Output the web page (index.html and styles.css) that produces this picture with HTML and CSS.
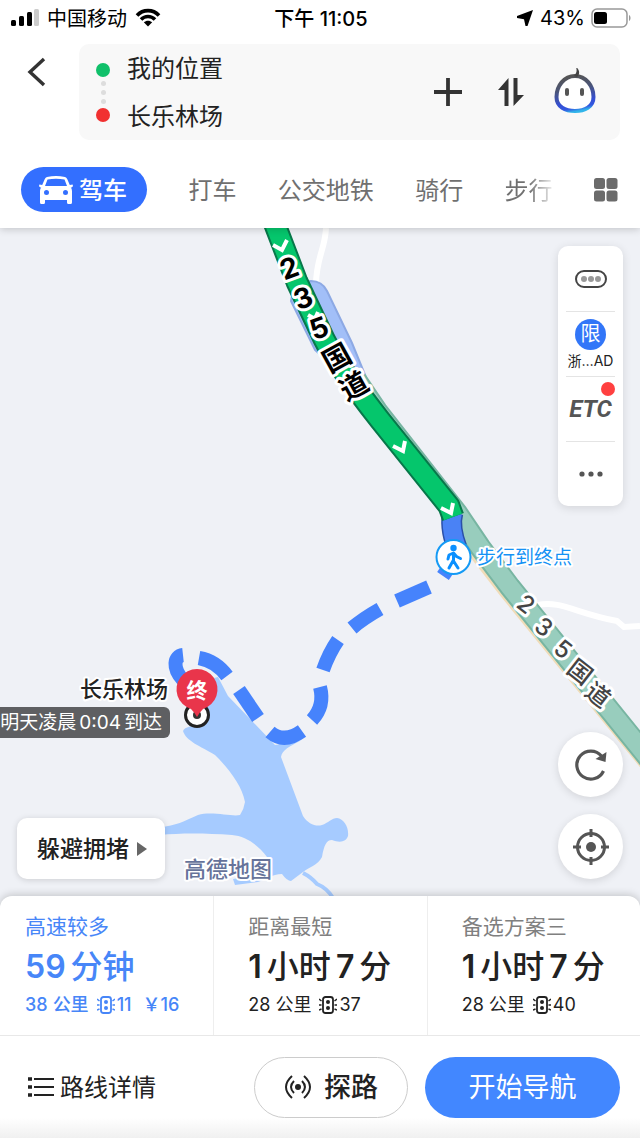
FILE: index.html
```html
<!DOCTYPE html>
<html lang="zh-CN">
<head>
    <meta charset="utf-8">
    <meta name="viewport" content="width=device-width, initial-scale=1">
    <title>路线规划</title>
    <link rel="stylesheet" href="styles.css">
</head>
<body>
    <header class="header">
        <div class="status">
            <div class="status-left">
                <svg width="28" height="18" viewBox="0 0 28 18">
                    <rect x="0" y="11" width="5" height="6" rx="1.5"/>
                    <rect x="8" y="7" width="5" height="10" rx="1.5"/>
                    <rect x="16" y="3" width="5" height="14" rx="1.5"/>
                    <rect x="23" y="0" width="5" height="17" rx="1.5" fill="#ccc"/>
                </svg>
                <span>中国移动</span>
                <svg width="26" height="19" viewBox="0 0 26 19">
                    <path d="M2 7.5C8 1 18 1 24 7.500M6 11.500c4-4 10-4 14 0" fill="none" stroke="#000" stroke-width="3.600"/>
                    <path d="M13 18.500l-4.200-4.200c2.400-2.200 6-2.200 8.400 0z"/>
                </svg>
            </div>
            <div class="status-time">下午 11:05</div>
            <div class="status-right">
                <svg width="18" height="18" viewBox="0 0 18 18">
                    <path d="M17 1L1 7v2l7 1.200L9.500 17h2z"/>
                </svg>
                <span>43%</span>
                <svg width="40" height="20" viewBox="0 0 40 20">
                    <rect x="1" y="1" width="35" height="18" rx="5" fill="none" stroke="#999" stroke-width="1.500"/>
                    <rect x="3" y="4" width="13" height="12" rx="2.500"/>
                    <path d="M38 7c2 1 2 5 0 6z" fill="#999"/>
                </svg>
            </div>
        </div>

        <div class="search">
            <button class="back" aria-label="返回">
                <svg width="20" height="30" viewBox="0 0 20 30">
                    <path d="M18 2L4 15l14 13" fill="none" stroke="#333" stroke-width="3.400"/>
                </svg>
            </button>
            <div class="route-box">
                <div class="route-dots">
                    <i class="dot dot-start"></i>
                    <i class="dot-small"></i>
                    <i class="dot-small"></i>
                    <i class="dot-small"></i>
                    <i class="dot dot-end"></i>
                </div>
                <div class="route-places">
                    <button class="place">我的位置</button>
                    <button class="place">长乐林场</button>
                </div>
                <div class="route-tools">
                    <button aria-label="添加途经点">
                        <svg width="28" height="28" viewBox="0 0 28 28">
                            <path d="M14 0v28M0 14h28" stroke="#333" stroke-width="3.800"/>
                        </svg>
                    </button>
                    <button aria-label="交换起终点">
                        <svg width="28" height="28" viewBox="0 0 28 28">
                            <path d="M11.500 0v28H7.500V12H1zM16.500 28V0h4v17H27z" fill="#333"/>
                        </svg>
                    </button>
                    <button aria-label="语音助手">
                        <svg width="42" height="48" viewBox="0 2 42 48">
                            <defs>
                                <linearGradient id="face" x1="0.4" y1="0" x2="0.6" y2="1">
                                    <stop offset="0" stop-color="#555"/>
                                    <stop offset="0.350" stop-color="#4b5577"/>
                                    <stop offset="0.750" stop-color="#344fd5"/>
                                    <stop offset="0.900" stop-color="#3358e0"/>
                                    <stop offset="1" stop-color="#31b5ea"/>
                                </linearGradient>
                            </defs>
                            <path d="M21 10C10 10 2.500 20 2.500 31c0 10 9 14 18.500 14s18.500-4 18.500-14C39.500 20 32 10 21 10z" fill="#fff" stroke="url(#face)" stroke-width="4"/>
                            <path d="M20 10c3-3 3-6 2-9 4 3 4 7 1 10z" fill="#444"/>
                            <rect x="11" y="22" width="4" height="8" rx="2" fill="#555"/>
                            <rect x="26" y="22" width="4" height="8" rx="2" fill="#555"/>
                        </svg>
                    </button>
                </div>
            </div>
        </div>

        <nav class="tabs">
            <button class="tab tab-active">
                <svg width="34" height="28" viewBox="0 0 34 28">
                    <path fill="#fff" fill-rule="evenodd" d="M8 1q9-2 18 0 1.500.400 2.200 2l2.600 6 2.700-.500c1 1.500 0 2.800-1.800 3 1 1 1.300 2.500 1.300 4v11q0 1.500-1.500 1.500h-2q-1.500 0-1.500-1.500V24H6v2.500Q6 28 4.500 28h-2Q1 28 1 26.500v-11c0-1.500.300-3 1.300-4C.500 11.300-.500 10 .500 8.500l2.700.500 2.600-6Q6.500 1.400 8 1zM8.500 3.500L6 10h22l-2.500-6.500Q17 2 8.500 3.500zM7.500 14a2.500 2.500 0 100 5 2.500 2.500 0 000-5zm19 0a2.500 2.500 0 100 5 2.500 2.500 0 000-5z"/>
                </svg>
                <span>驾车</span>
            </button>
            <button class="tab">打车</button>
            <button class="tab">公交地铁</button>
            <button class="tab">骑行</button>
            <button class="tab tab-fade">步行</button>
            <button class="tab-all" aria-label="全部出行方式">
                <svg width="24" height="24" viewBox="0 0 24 24" fill="#6b6b6b">
                    <rect x="0" y="0" width="11" height="11" rx="2.500"/>
                    <rect x="12.500" y="0" width="11" height="11" rx="2.500"/>
                    <rect x="0" y="12.500" width="11" height="11" rx="2.500"/>
                    <rect x="12.500" y="12.500" width="11" height="11" rx="2.500"/>
                </svg>
            </button>
        </nav>
    </header>

    <main class="map">
        <svg class="map-canvas" viewBox="0 228 640 680" preserveAspectRatio="xMidYMid slice">
            <!-- lake -->
            <path fill="#a6cbff" d="M218 677L228 696 253 722 275 745 300 741C290 746 282 750 281 757L303 816C308 824 316 827 322 825 328 823 332 818 337 818 344 819 349 827 348 836 346 842 340 843 332 840 326 840 324 846 322 857C318 865 308 868 303 872L291 881Q287 881 282 874C272 874 265 880 258 882L235 885 233 879 260 874 267 857C258 845 246 836 232 835 205 833 180 833 160 835V827C176 826 184 821 198 815 212 811 232 817 240 815Q244 809 245 802C242 785 228 768 215 755 200 746 186 741 183 731 185 726 192 728 200 720L186 702 190 684z"/>
            <path d="M303 873q8 4 14 11 10 4 16 14" fill="none" stroke="#a6cbff" stroke-width="4"/>

            <!-- minor roads -->
            <path class="minor-road" d="M326 228C325 250 316 258 316 285"/>
            <path class="minor-road" d="M538 605C560 600 578 614 617 621L624 627 640 626"/>

            <!-- national road -->
            <path d="M291 301Q293 283 311 281 322 281 327 291L352 343 372 392 352 384 315 350z" fill="#a2bff8" stroke="#8da9e4" stroke-width="2"/>
            <path d="M457 516L477 548 508 588 650 762" fill="none" stroke="#f0dcb8" stroke-width="22"/>
            <path d="M356 380L377 411 457 513 480 547 510 587 650 760" fill="none" stroke="#78b5a2" stroke-width="22"/>
            <path d="M356 380L377 411 457 513 480 547 510 587 650 760" fill="none" stroke="#98cdbd" stroke-width="18"/>

            <!-- driving route -->
            <path d="M453 512Q449 526 457 548" fill="none" stroke="#2b50a8" stroke-width="21"/>
            <path d="M453 512Q449 526 457 548" fill="none" stroke="#4a82f5" stroke-width="18"/>
            <path d="M274 222L297 282 324 339Q337 365 380 420L449 506 453 517" fill="none" stroke="#07784a" stroke-width="23" stroke-linejoin="round"/>
            <path d="M274 222L297 282 324 339Q337 365 380 420L449 506 453 517" fill="none" stroke="#05c66c" stroke-width="19" stroke-linejoin="round"/>
            <g class="arrows">
                <path d="M273 245l9 5 5-10"/>
                <path d="M308 315l7 4 3-7"/>
                <path d="M393 446l10 5 2-10"/>
                <path d="M441 508l10 5 2-10"/>
            </g>

            <!-- walking route -->
            <g class="walk-route">
                <path d="M451 564L443 576"/>
                <path d="M397 601l32-14"/>
                <path d="M352 628Q364 618 380 609"/>
                <path d="M323 670Q329 653 338 640"/>
                <path d="M320 687Q325 706 312 720"/>
                <path d="M302 731Q284 744 270 732"/>
                <path d="M258 718L239 690"/>
                <path d="M227 676Q216 661 199 658"/>
                <path d="M183 680C172 668 174 656 183 655"/>
            </g>

            <!-- road names -->
            <g class="road-name road-name-main">
                <text transform="translate(289 268) rotate(-20)">2</text>
                <text transform="translate(303 298) rotate(-20)">3</text>
                <text transform="translate(319 328) rotate(-20)">5</text>
                <text transform="translate(337 358) rotate(-29)">国</text>
                <text transform="translate(354 386) rotate(-29)">道</text>
            </g>
            <g class="road-name">
                <text transform="translate(526 604) rotate(38)">2</text>
                <text transform="translate(544 627) rotate(38)">3</text>
                <text transform="translate(563 649) rotate(38)">5</text>
                <text transform="translate(580 672) rotate(38)">国</text>
                <text transform="translate(598 695) rotate(38)">道</text>
            </g>

            <!-- walking transfer -->
            <circle cx="453.500" cy="557" r="17" fill="#fff" stroke="#149af5" stroke-width="2"/>
            <circle cx="453.500" cy="548" r="3.200" fill="#0b90ff"/>
            <path d="M453.500 554v7l4.500 7M453.500 560l-4.500 8M448 559l1-4 4.500-2 3 3.500 4 2" fill="none" stroke="#0b90ff" stroke-width="3" stroke-linecap="round" stroke-linejoin="round"/>
            <text class="walk-label" x="477" y="564">步行到终点</text>

            <!-- destination -->
            <circle cx="197" cy="715" r="11.500" fill="#fff" stroke="#222" stroke-width="3"/>
            <circle cx="197" cy="715" r="4" fill="#333"/>
            <path d="M197 717q-2-4-6-8a20.500 20.500 0 1112 0q-4 4-6 8z" fill="#e9354b"/>
            <text class="pin-text" x="197" y="698">终</text>
            <text class="dest-label" x="168" y="697">长乐林场</text>
            <rect x="-20" y="707" width="190" height="31" rx="6" fill="#5e5f62"/>
            <text class="eta" x="162" y="729">明天凌晨<tspan dx="3">0:04</tspan><tspan dx="3">到达</tspan></text>

            <text class="brand" x="184" y="877">高德地图</text>
        </svg>

        <div class="side-panel">
            <button class="side-item" aria-label="常用">
                <svg width="32" height="18" viewBox="0 0 32 18">
                    <rect x="1" y="1" width="30" height="16" rx="8" fill="#fff" stroke="#444" stroke-width="2"/>
                    <g fill="#999"><circle cx="9" cy="9" r="3"/><circle cx="16" cy="9" r="3"/><circle cx="23" cy="9" r="3"/></g>
                </svg>
            </button>
            <button class="side-item">
                <span class="limit">限</span>
                <span class="plate">浙…AD</span>
            </button>
            <button class="side-item etc">ETC</button>
            <button class="side-item" aria-label="更多">
                <svg width="24" height="6" viewBox="0 0 24 6" fill="#555">
                    <circle cx="3" cy="3" r="2.600"/><circle cx="12" cy="3" r="2.600"/><circle cx="21" cy="3" r="2.600"/>
                </svg>
            </button>
        </div>

        <button class="avoid">
            <span>躲避拥堵</span>
            <svg width="10" height="14" viewBox="0 0 10 14"><path d="M0 0l10 7-10 7z" fill="#666"/></svg>
        </button>

        <div class="round-buttons">
            <button class="round" aria-label="刷新">
                <svg width="36" height="36" viewBox="0 0 36 36">
                    <path d="M30.500 24a14 14 0 11-2-15" fill="none" stroke="#555" stroke-width="3.200"/>
                    <path d="M33.500 5l-1 10-10-3z" fill="#555"/>
                </svg>
            </button>
            <button class="round" aria-label="定位">
                <svg width="36" height="36" viewBox="0 0 36 36">
                    <circle cx="18" cy="18" r="13.500" fill="none" stroke="#555" stroke-width="3"/>
                    <circle cx="18" cy="18" r="5" fill="#555"/>
                    <path d="M18 0v8M18 28v8M0 18h8M28 18h8" stroke="#555" stroke-width="3"/>
                </svg>
            </button>
        </div>
    </main>

    <svg class="symbols" width="0" height="0">
        <symbol id="light" viewBox="0 0 18 18">
            <rect x="4" y="1" width="10" height="16" rx="2.500" fill="none" stroke="currentColor" stroke-width="1.800"/>
            <circle cx="9" cy="6" r="2" fill="currentColor"/>
            <circle cx="9" cy="12" r="2" fill="currentColor"/>
            <path d="M0 3l2.500 2M0 9h2.500M0 14l2.500-1M18 3l-2.500 2M18 9h-2.500M18 14l-2.500-1" stroke="currentColor" stroke-width="1.500"/>
        </symbol>
    </svg>

    <section class="sheet">
        <div class="plans">
            <button class="plan plan-active">
                <span class="plan-name">高速较多</span>
                <span class="plan-time"><b>59</b>分钟</span>
                <span class="plan-info"><b>38</b>公里 <svg class="light"><use href="#light"/></svg><b>11</b><span class="fee">￥16</span></span>
            </button>
            <button class="plan">
                <span class="plan-name">距离最短</span>
                <span class="plan-time"><b>1</b>小时<b class="minutes">7</b>分</span>
                <span class="plan-info"><b>28</b>公里 <svg class="light"><use href="#light"/></svg><b>37</b></span>
            </button>
            <button class="plan">
                <span class="plan-name">备选方案三</span>
                <span class="plan-time"><b>1</b>小时<b class="minutes">7</b>分</span>
                <span class="plan-info"><b>28</b>公里 <svg class="light"><use href="#light"/></svg><b>40</b></span>
            </button>
        </div>
        <div class="actions">
            <button class="detail">
                <svg width="26" height="20" viewBox="0 0 26 20">
                    <path d="M0 2h4M0 10h4M0 18h4" stroke="#222" stroke-width="3.500"/>
                    <path d="M6 2h20M6 10h20M6 18h20" stroke="#222" stroke-width="2"/>
                </svg>
                <span>路线详情</span>
            </button>
            <button class="explore">
                <svg width="28" height="24" viewBox="0 0 28 24" fill="none" stroke="#222" stroke-width="2">
                    <circle cx="14" cy="12" r="3" fill="#222" stroke="none"/>
                    <path d="M8 1q-12 11 0 22M10 6q-6 6 0 12M20 1q12 11 0 22M18 6q6 6 0 12"/>
                </svg>
                <span>探路</span>
            </button>
            <button class="start">开始导航</button>
        </div>
    </section>
</body>
</html>
```
FILE: styles.css
```css
* {
    box-sizing: border-box;
}

body {
    margin: 0;
    min-height: 100vh;
    display: flex;
    flex-direction: column;
    background: #fff;
    color: #222;
    font-family: Inter, "Noto Sans CJK SC", sans-serif;
    overflow-x: hidden;
}

button {
    padding: 0;
    border: none;
    background: none;
    color: inherit;
    font: inherit;
    white-space: nowrap;
    cursor: pointer;
}

svg {
    display: block;
    flex-shrink: 0;
}

.header {
    position: relative;
    z-index: 1;
    background: #fff;
    box-shadow: 0 1px 8px rgba(0, 0, 0, 0.2);
}

/* status bar */
.status {
    display: grid;
    grid-template-columns: 1fr auto 1fr;
    align-items: center;
    height: 35px;
    padding: 0 9px 0 11px;
    font-size: 20px;
    color: #000;
}

.status-left,
.status-right {
    display: flex;
    align-items: center;
    gap: 8px;
}

.status-right {
    justify-content: flex-end;
    gap: 6px;
}

.status-time {
    font-size: 20px;
    font-weight: 500;
}

/* start and destination */
.search {
    display: flex;
    align-items: flex-start;
    padding: 9px 20px 0 26px;
}

.back {
    width: 53px;
    padding-top: 13px;
}

.route-box {
    flex: 1;
    display: flex;
    align-items: center;
    height: 96px;
    padding: 0 24px 0 17px;
    border-radius: 10px;
    background: #f8f8f8;
}

.route-dots {
    display: flex;
    flex-direction: column;
    align-items: center;
    gap: 4px;
    width: 14px;
    margin-right: 17px;
}

.dot {
    width: 14px;
    height: 14px;
    border-radius: 50%;
}

.dot-start {
    background: #10c06a;
}

.dot-end {
    background: #f13030;
}

.dot-small {
    width: 5px;
    height: 5px;
    border-radius: 50%;
    background: #ddd;
}

.route-places {
    flex: 1;
    display: flex;
    flex-direction: column;
    align-items: flex-start;
}

.place {
    height: 48px;
    padding-bottom: 4px;
    font-size: 24px;
}

.route-tools {
    display: flex;
    align-items: center;
    gap: 35px;
}

.route-tools button:last-child {
    margin-left: -6px;
}

/* travel modes */
.tabs {
    display: flex;
    align-items: center;
    justify-content: space-between;
    padding: 27px 22px 16px 21px;
}

.tab {
    height: 45px;
    padding-bottom: 3px;
    font-size: 24px;
    color: #707070;
}

.tab-active {
    display: flex;
    align-items: center;
    gap: 6px;
    padding: 0 20px 0 18px;
    border-radius: 23px;
    background: #336fff;
    color: #fff;
    font-weight: 500;
}

.tab span,
.avoid span,
.detail span,
.explore span {
    padding-bottom: 3px;
}

.tab-fade {
    background: linear-gradient(90deg, #707070 50%, #eee);
    background-clip: text;
    -webkit-background-clip: text;
    color: transparent;
}

/* map */
.map {
    position: relative;
    flex: 1;
    min-height: 500px;
    background: #eff1f6;
    overflow: hidden;
}

.map-canvas {
    position: absolute;
    inset: 0;
    width: 100%;
    height: 100%;
}

.minor-road {
    fill: none;
    stroke: #fff;
    stroke-width: 6px;
}

.arrows {
    fill: none;
    stroke: #fff;
    stroke-width: 4px;
}

.walk-route {
    fill: none;
    stroke: #4683fc;
    stroke-width: 14px;
}

.map-canvas text {
    paint-order: stroke;
    stroke: #fff;
    stroke-width: 4px;
    stroke-linejoin: round;
}

.road-name {
    font-size: 24px;
    font-weight: 500;
    text-anchor: middle;
    dominant-baseline: central;
    fill: #444;
}

.road-name-main {
    font-size: 28px;
    font-weight: 700;
    fill: #000;
}

.map-canvas .road-name text {
    stroke-width: 6px;
}

.walk-label {
    font-size: 19px;
    fill: #1592f5;
}

.map-canvas .pin-text {
    font-size: 21px;
    font-weight: 700;
    text-anchor: middle;
    fill: #fff;
    stroke: none;
}

.dest-label {
    font-size: 22px;
    font-weight: 500;
    text-anchor: end;
    fill: #222;
}

.map-canvas .eta {
    font-size: 19px;
    text-anchor: end;
    fill: #fff;
    stroke: none;
}

.brand {
    font-size: 22px;
    font-weight: 500;
    fill: #66739a;
}

.side-panel {
    position: absolute;
    top: 18px;
    right: 17px;
    display: flex;
    flex-direction: column;
    width: 65px;
    padding: 0 8px;
    border-radius: 10px;
    background: #fff;
    box-shadow: 0 2px 10px rgba(0, 0, 0, 0.12);
}

.side-item {
    position: relative;
    display: flex;
    flex-direction: column;
    align-items: center;
    justify-content: center;
    height: 65px;
}

.side-item + .side-item {
    border-top: 1px solid #e4e4e4;
}

.limit {
    width: 31px;
    border-radius: 50%;
    background: #3276f8;
    color: #fff;
    font-size: 20px;
    line-height: 31px;
}

.plate {
    margin-top: 2px;
    font-size: 14px;
    line-height: 18px;
}

.etc {
    font-family: "Liberation Sans Narrow", Roboto, sans-serif;
    font-size: 24px;
    font-style: italic;
    font-weight: 700;
    color: #555;
}

.etc::after {
    content: "";
    position: absolute;
    top: 5px;
    right: 0;
    width: 14px;
    height: 14px;
    border-radius: 50%;
    background: #ff4040;
}

.avoid {
    position: absolute;
    left: 17px;
    bottom: 29px;
    display: flex;
    align-items: center;
    gap: 8px;
    height: 61px;
    padding: 0 18px 0 20px;
    border-radius: 10px;
    background: #fff;
    box-shadow: 0 1px 6px rgba(0, 0, 0, 0.15);
    font-size: 23px;
    font-weight: 500;
}

.round-buttons {
    position: absolute;
    right: 17px;
    bottom: 29px;
    display: flex;
    flex-direction: column;
    gap: 17px;
}

.round {
    display: flex;
    align-items: center;
    justify-content: center;
    width: 65px;
    height: 65px;
    border-radius: 50%;
    background: #fff;
    box-shadow: 0 2px 8px rgba(0, 0, 0, 0.12);
}

.symbols {
    position: absolute;
}

/* bottom sheet */
.sheet {
    position: relative;
    margin-top: -12px;
    border-radius: 12px 12px 0 0;
    background: #fff;
    box-shadow: 0 -1px 8px rgba(0, 0, 0, 0.2);
}

.plans {
    display: grid;
    grid-template-columns: repeat(3, 1fr);
    border-bottom: 1px solid #e8e8e8;
}

.plan {
    display: flex;
    flex-direction: column;
    align-items: flex-start;
    height: 139px;
    padding: 16px 0 0 34px;
    border-left: 1px solid #eee;
}

.plan b {
    margin-right: 5px;
    font-weight: inherit;
}

.plan-name {
    font-size: 21px;
    line-height: 30px;
    color: #808080;
}

.plan-time {
    font-size: 32px;
    font-weight: 500;
    line-height: 50px;
}

.plan-time b {
    font-weight: 600;
}

.plan-time .minutes {
    margin-left: 5px;
}

.plan-info {
    display: flex;
    align-items: center;
    font-size: 18px;
    line-height: 26px;
}

.light {
    width: 18px;
    height: 18px;
    margin: 0 2px 0 8px;
}

.fee {
    margin-left: 6px;
}

.plan-active {
    padding-left: 25px;
    border-left: none;
    color: #4786f8;
}

.plan-active .plan-name {
    color: inherit;
}

.plan-active .plan-info {
    font-weight: 500;
}

.actions {
    display: flex;
    align-items: center;
    gap: 17px;
    height: 102px;
    padding: 0 20px 0 28px;
    background: linear-gradient(#fff 80%, #f0f0f0);
}

.detail {
    display: flex;
    align-items: center;
    gap: 6px;
    margin-right: auto;
    font-size: 24px;
}

.explore {
    display: flex;
    align-items: center;
    justify-content: center;
    gap: 12px;
    width: 154px;
    height: 61px;
    border: 1px solid #ccc;
    border-radius: 31px;
    font-size: 27px;
    font-weight: 500;
}

.start {
    width: 195px;
    height: 61px;
    padding-bottom: 3px;
    border-radius: 31px;
    background: #4287ff;
    color: #fff;
    font-size: 27px;
}
```
